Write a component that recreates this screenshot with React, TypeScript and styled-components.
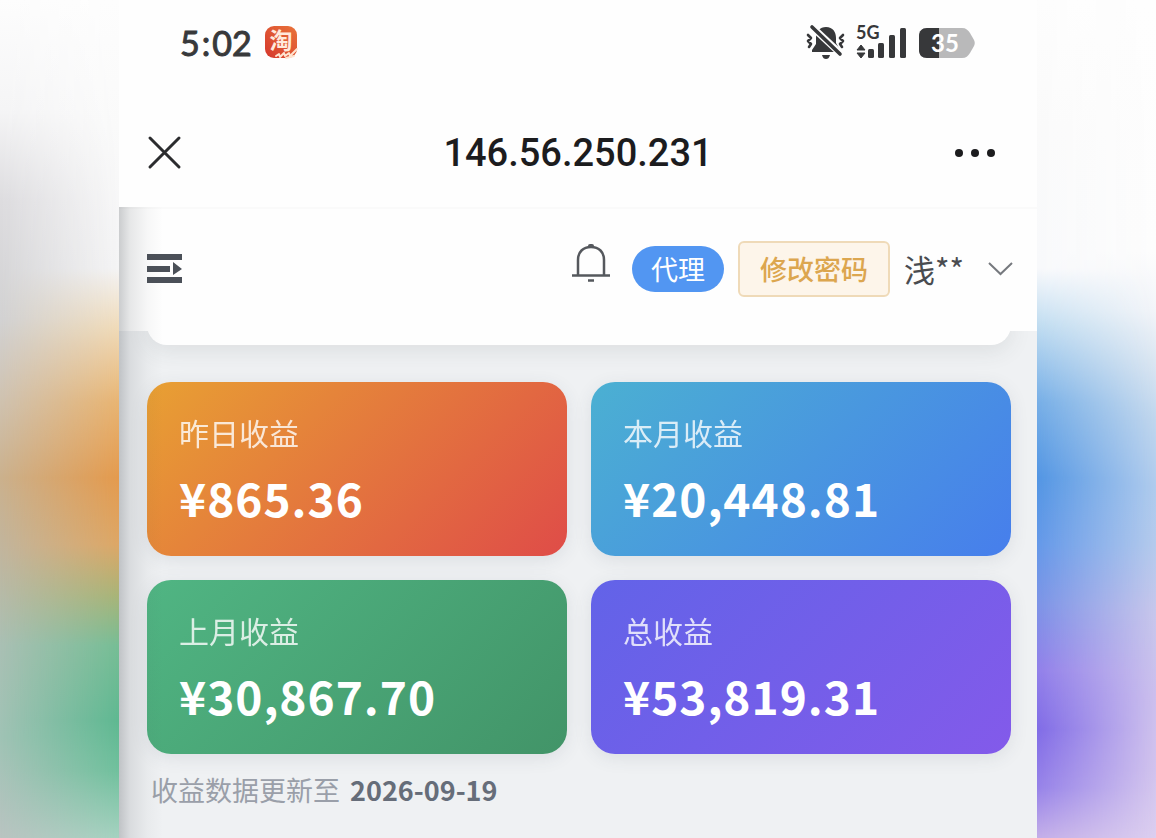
import React from "react";
import styled, { createGlobalStyle } from "styled-components";

const GlobalStyle = createGlobalStyle`
  * { box-sizing: border-box; }
  body {
    margin: 0;
    background: #fff;
    font-family: "Noto Sans CJK SC", "Noto Sans", sans-serif;
  }
  button {
    margin: 0;
    padding: 0;
    border: 0;
    background: none;
    font-family: inherit;
    cursor: pointer;
  }
  svg { display: block; overflow: visible; }
`;

const Page = styled.div`
  display: grid;
  grid-template-columns: 119px minmax(0, 1fr) 119px;
  min-height: 100vh;
`;

const Backdrop = styled.div<{ $outer: string; $inner: string; $toward: string }>`
  position: relative;
  background: linear-gradient(to bottom, ${(p) => p.$outer});

  &::after {
    content: "";
    position: absolute;
    inset: 0;
    background: linear-gradient(to bottom, ${(p) => p.$inner});
    mask-image: linear-gradient(${(p) => p.$toward}, transparent, #000);
  }
`;

const Phone = styled.main`
  display: flex;
  flex-direction: column;
  background: #fefefe;
`;

const StatusBar = styled.div`
  display: flex;
  align-items: center;
  justify-content: space-between;
  height: 98px;
  padding: 0 61px 12px;
`;

const StatusGroup = styled.div<{ $gap: number }>`
  display: flex;
  align-items: center;
  gap: ${(p) => p.$gap}px;
`;

const Clock = styled.time`
  font: 400 34px/44px Lato, sans-serif;
  color: #38393b;
  -webkit-text-stroke: 1px #38393b;
`;

const Colon = styled.span`
  padding: 0 2px;
`;

const NavBar = styled.nav`
  display: grid;
  grid-template-columns: 1fr auto 1fr;
  align-items: center;
  height: 109px;
  padding: 0 28px;
`;

const NavTitle = styled.h1`
  margin: 0;
  font: 500 38px/48px Roboto, sans-serif;
  color: #1c1c1e;
`;

const IconButton = styled.button`
  justify-self: start;
`;

const MoreButton = styled.button`
  justify-self: end;
  padding: 0 12px;
`;

const WebView = styled.div`
  position: relative;
  flex: 1;
  display: flex;
  flex-direction: column;
  background: #eff1f3;

  &::after {
    content: "";
    position: absolute;
    inset: 0 auto 0 0;
    width: 44px;
    background: linear-gradient(
      to right,
      rgba(70, 76, 82, 0.28),
      rgba(70, 76, 82, 0.13) 25%,
      rgba(70, 76, 82, 0.04) 65%,
      transparent
    );
    pointer-events: none;
  }
`;

const AppHeader = styled.header`
  display: flex;
  align-items: center;
  justify-content: space-between;
  height: 124px;
  padding: 0 24px 2px 28px;
  background: #fefefe;
  border-top: 2px solid #fafafa;
`;

const HeaderTools = styled.div`
  display: flex;
  align-items: center;
  gap: 14px;
`;

const BellButton = styled.button`
  margin-right: 8px;
  padding-bottom: 12px;
`;

const RoleTag = styled.span`
  padding: 0 19px;
  border-radius: 23px;
  background: #5296f2;
  color: #fff;
  font-size: 27px;
  line-height: 46px;
`;

const PasswordButton = styled.button`
  height: 56px;
  padding: 0 20px;
  border: 2px solid #efdab8;
  border-radius: 6px;
  background: #fdf5ea;
  color: #dca64f;
  font-size: 27px;
  font-weight: 500;
  line-height: 52px;
`;

const UserButton = styled.button`
  display: flex;
  align-items: center;
  gap: 24px;
  color: #4a4c50;
  font-size: 31px;
  line-height: 46px;
`;

const Content = styled.section`
  flex: 1;
  overflow: hidden;
  padding: 0 26px 24px 28px;
`;

const PreviousPanel = styled.div`
  height: 40px;
  margin-top: -26px;
  border-radius: 24px;
  background: #fefefe;
  box-shadow: 0 6px 22px rgba(60, 64, 70, 0.1);
`;

const CardGrid = styled.div`
  display: grid;
  grid-template-columns: repeat(2, minmax(0, 1fr));
  gap: 24px;
  margin-top: 37px;
`;

const Card = styled.article<{ $from: string; $to: string }>`
  height: 174px;
  padding: 29px 32px;
  border-radius: 24px;
  background: linear-gradient(135deg, ${(p) => p.$from}, ${(p) => p.$to});
  box-shadow: 0 4px 18px rgba(60, 70, 90, 0.1);
  color: #fff;
`;

const CardLabel = styled.h2`
  margin: 0;
  font-size: 30px;
  font-weight: 400;
  line-height: 42px;
  opacity: 0.8;
`;

const CardValue = styled.p`
  margin: 14px 0 0;
  font-size: 46px;
  font-weight: 700;
  line-height: 60px;
  letter-spacing: 1px;
`;

const UpdateNote = styled.p`
  margin: 16px 0 0;
  padding-left: 4px;
  color: #9a9fa9;
  font-size: 27px;
  line-height: 40px;

  time {
    margin-left: 4px;
    color: #666d79;
    font-weight: 700;
  }
`;

const ShopIcon = () => (
  <svg width="36" height="36" viewBox="0 0 36 36" role="img" aria-label="淘宝">
    <defs>
      <linearGradient id="shop" x1="0" y1="1" x2="1" y2="0">
        <stop offset="0" stopColor="#d5372c" />
        <stop offset="1" stopColor="#e9743a" />
      </linearGradient>
    </defs>
    <rect x="1" y="1" width="32" height="32" rx="9" fill="url(#shop)" />
    <text x="17" y="24" textAnchor="middle" fontSize="23" fontWeight="700" fill="#ffe9dc">淘</text>
    <path
      d="M12 31l3-2 1 3 4-4 1 3 4-3 1 3 7-7M22 33l8-2"
      fill="none"
      stroke="#ffe4d0"
      strokeWidth="2"
      strokeLinecap="round"
      strokeLinejoin="round"
    />
  </svg>
);

const MutedIcon = () => (
  <svg width="40" height="36" viewBox="0 0 40 36" aria-hidden="true">
    <g fill="#37383a">
      <path d="M20 2c7 0 10 5 10 11v5l4 7v2H6v-2l4-6v-6C10 6 14 2 20 2z" />
      <path d="M16 30h8c-1 3-2 4-4 4s-3-1-4-4z" />
    </g>
    <path d="M5 1l30 28" stroke="#fefefe" strokeWidth="7" />
    <path d="M6 2l28 27" stroke="#37383a" strokeWidth="3.6" strokeLinecap="round" />
    <path
      d="M2 10l3 3-3 3 3 3-2 3M37 10l-3 3 3 3-3 3 2 3"
      fill="none"
      stroke="#37383a"
      strokeWidth="2.6"
      strokeLinejoin="round"
      strokeLinecap="round"
    />
  </svg>
);

const SignalIcon = () => (
  <svg width="52" height="36" viewBox="0 0 52 36" role="img" aria-label="5G">
    <text x="0" y="14" fontFamily="Lato, sans-serif" fontSize="18" fontWeight="700" fill="#37383a">5G</text>
    <g fill="#37383a">
      <path d="M5 20l4 5H1zM5 33l4-5H1z" stroke="#37383a" strokeWidth="1" strokeLinejoin="round" />
      <rect x="12" y="24" width="6" height="9" rx="1.5" />
      <rect x="22" y="18" width="6" height="15" rx="1.5" />
      <rect x="33" y="10" width="6" height="23" rx="1.5" />
      <rect x="44" y="3" width="6" height="30" rx="1.5" />
    </g>
  </svg>
);

const BatteryIcon = () => (
  <svg width="58" height="32" viewBox="0 0 58 32" role="img" aria-label="35%">
    <defs>
      <clipPath id="cell">
        <path d="M9 1h35c4 0 6 2 8 5l4 7c1 2 1 4 0 6l-4 7c-2 3-4 5-8 5H9c-5 0-8-3-8-8V9c0-5 3-8 8-8z" />
      </clipPath>
    </defs>
    <g clipPath="url(#cell)">
      <rect width="58" height="32" fill="#b9b9ba" />
      <rect width="21" height="32" fill="#37383a" />
    </g>
    <text x="27" y="25" textAnchor="middle" fontFamily="Lato, sans-serif" fontSize="24" fontWeight="700" fill="#fff">35</text>
  </svg>
);

const CloseIcon = () => (
  <svg width="36" height="36" viewBox="0 0 36 36" aria-hidden="true">
    <path d="M3 3l29 29M32 3L3 32" stroke="#2b2c2e" strokeWidth="3" strokeLinecap="round" />
  </svg>
);

const MoreIcon = () => (
  <svg width="44" height="12" viewBox="0 0 44 12" fill="#1c1c1e" aria-hidden="true">
    <circle cx="6" cy="6" r="4" />
    <circle cx="22" cy="6" r="4" />
    <circle cx="38" cy="6" r="4" />
  </svg>
);

const MenuIcon = () => (
  <svg width="36" height="30" viewBox="0 0 36 30" fill="#4b5058" aria-hidden="true">
    <path d="M0 0h35v6H0zM0 12h23v6H0zM0 23h35v6H0zM26 8l9 7-9 6z" />
  </svg>
);

const BellIcon = () => (
  <svg width="38" height="40" viewBox="0 0 38 40" fill="none" stroke="#55585d" strokeWidth="2.5" aria-hidden="true">
    <path d="M6 32V17C6 9 11 4 19 4s13 5 13 13v15" />
    <path d="M0 32.5h38" />
    <path d="M16 37.5h6" />
    <path d="M18 3h2" strokeWidth="4" strokeLinecap="round" />
  </svg>
);

const ChevronIcon = () => (
  <svg width="25" height="16" viewBox="0 0 25 16" fill="none" aria-hidden="true">
    <path d="M1 2l11.5 11L24 2" stroke="#76797e" strokeWidth="2" />
  </svg>
);

const earnings = [
  { label: "昨日收益", value: "¥865.36", from: "#e8a033", to: "#df4c48" },
  { label: "本月收益", value: "¥20,448.81", from: "#4bb0d2", to: "#477eec" },
  { label: "上月收益", value: "¥30,867.70", from: "#50b583", to: "#429468" },
  { label: "总收益", value: "¥53,819.31", from: "#6263e8", to: "#835aea" },
];

export default function App() {
  return (
    <>
      <GlobalStyle />
      <Page>
        <Backdrop
          $toward="to right"
          $outer="#fdfdfd, #f5f5f6 13%, #dddcdf 24%, #d2d2d3 38%, #cfc2b0 48%, #cbb18d 57%, #c1b69f 66%, #aac0b4 77%, #a0c3b5 88%, #b9c4c1"
          $inner="#fdfdfd, #fafafa 15%, #f4f4f5 32%, #f0dbb9 39%, #e8b472 48%, #e49a4d 57%, #dda766 65%, #a9b477 71%, #76bd95 77%, #5eb891 86%, #70c09d 92%, #a5d2c0"
        />
        <Phone>
          <StatusBar>
            <StatusGroup $gap={12}>
              <Clock>5<Colon>:</Colon>02</Clock>
              <ShopIcon />
            </StatusGroup>
            <StatusGroup $gap={10}>
              <MutedIcon />
              <SignalIcon />
              <BatteryIcon />
            </StatusGroup>
          </StatusBar>
          <NavBar>
            <IconButton aria-label="关闭"><CloseIcon /></IconButton>
            <NavTitle>146.56.250.231</NavTitle>
            <MoreButton aria-label="更多"><MoreIcon /></MoreButton>
          </NavBar>
          <WebView>
            <AppHeader>
              <IconButton aria-label="展开菜单"><MenuIcon /></IconButton>
              <HeaderTools>
                <BellButton aria-label="通知"><BellIcon /></BellButton>
                <RoleTag>代理</RoleTag>
                <PasswordButton>修改密码</PasswordButton>
                <UserButton>浅**<ChevronIcon /></UserButton>
              </HeaderTools>
            </AppHeader>
            <Content>
              <PreviousPanel />
              <CardGrid>
                {earnings.map((item) => (
                  <Card key={item.label} $from={item.from} $to={item.to}>
                    <CardLabel>{item.label}</CardLabel>
                    <CardValue>{item.value}</CardValue>
                  </Card>
                ))}
              </CardGrid>
              <UpdateNote>
                收益数据更新至 <time dateTime="2026-09-19">2026-09-19</time>
              </UpdateNote>
            </Content>
          </WebView>
        </Phone>
        <Backdrop
          $toward="to left"
          $outer="#fefefe, #fdfdfd 30%, #f3f5f9 37%, #dce7f2 43%, #c1d7ee 50%, #b0ccee 58%, #b5cbed 65%, #c8c7ec 73%, #ccc0ee 83%, #d2c4ee 92%, #dccff0"
          $inner="#fdfdfd, #fafafa 15%, #f8f9fb 32%, #bedbf0 39%, #76aee6 48%, #5295e3 57%, #6498e8 65%, #7b93e6 72%, #917fe9 80%, #806be6 87%, #9682e8 94%, #c3aee8"
        />
      </Page>
    </>
  );
}
